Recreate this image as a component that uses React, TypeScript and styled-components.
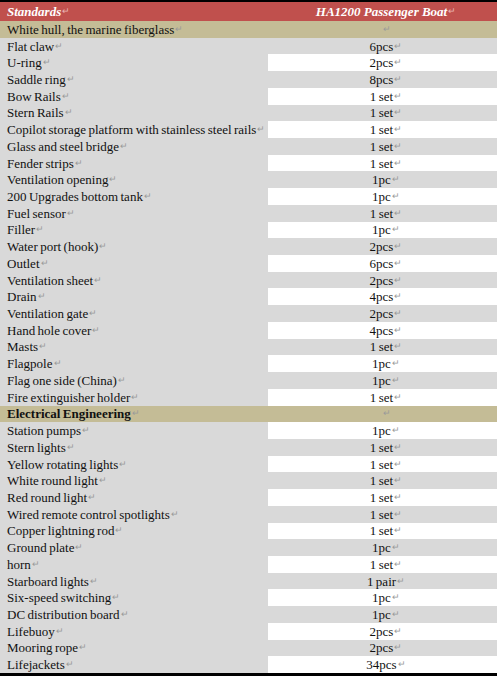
import styled, { createGlobalStyle } from 'styled-components';

const GlobalStyle = createGlobalStyle`
  html, body {
    margin: 0;
    padding: 0;
    background: #ffffff;
  }
  body {
    font-family: "Liberation Serif", "Times New Roman", serif;
    color: #111111;
  }
`;

const Table = styled.div`
  width: 497px;
  height: 676px;
  box-sizing: border-box;
  border-top: 2px solid #000;
  border-bottom: 3px solid #000;
  display: grid;
  grid-template-columns: 268px 1fr;
  grid-template-rows: 19px repeat(39, 1fr);
  background: #d9d9d9;
`;

const Cell = styled.div<{ $bg: string; $center?: boolean; $bold?: boolean }>`
  background: ${(p) => p.$bg};
  display: flex;
  align-items: center;
  justify-content: ${(p) => (p.$center ? 'center' : 'flex-start')};
  padding: 0 0 0 7px;
  font-size: 13px;
  line-height: 1;
  word-spacing: -0.8px;
  white-space: nowrap;
  overflow: hidden;
  font-weight: ${(p) => (p.$bold ? 'bold' : 'normal')};
`;

const HeadCell = styled(Cell)`
  color: #ffffff;
  font-style: italic;
  font-weight: bold;
  word-spacing: 0;
`;

const Mark = styled.span<{ $light?: boolean }>`
  color: ${(p) => (p.$light ? '#e8b4b3' : '#9a9a9a')};
  font-size: 9px;
  font-weight: normal;
  font-style: normal;
  margin-left: 1px;
`;

const RED = '#c0504d';
const TAN = '#c4bc96';
const GRAY = '#d9d9d9';
const WHITE = '#ffffff';

type Row = { name: string; qty: string } | { section: string };

const rows: Row[] = [
  { section: 'White hull, the marine fiberglass' },
  { name: 'Flat claw', qty: '6pcs' },
  { name: 'U-ring', qty: '2pcs' },
  { name: 'Saddle ring', qty: '8pcs' },
  { name: 'Bow Rails', qty: '1 set' },
  { name: 'Stern Rails', qty: '1 set' },
  { name: 'Copilot storage platform with stainless steel rails', qty: '1 set' },
  { name: 'Glass and steel bridge', qty: '1 set' },
  { name: 'Fender strips', qty: '1 set' },
  { name: 'Ventilation opening', qty: '1pc' },
  { name: '200 Upgrades bottom tank', qty: '1pc' },
  { name: 'Fuel sensor', qty: '1 set' },
  { name: 'Filler', qty: '1pc' },
  { name: 'Water port (hook)', qty: '2pcs' },
  { name: 'Outlet', qty: '6pcs' },
  { name: 'Ventilation sheet', qty: '2pcs' },
  { name: 'Drain', qty: '4pcs' },
  { name: 'Ventilation gate', qty: '2pcs' },
  { name: 'Hand hole cover', qty: '4pcs' },
  { name: 'Masts', qty: '1 set' },
  { name: 'Flagpole', qty: '1pc' },
  { name: 'Flag one side (China)', qty: '1pc' },
  { name: 'Fire extinguisher holder', qty: '1 set' },
  { section: 'Electrical Engineering' },
  { name: 'Station pumps', qty: '1pc' },
  { name: 'Stern lights', qty: '1 set' },
  { name: 'Yellow rotating lights', qty: '1 set' },
  { name: 'White round light', qty: '1 set' },
  { name: 'Red round light', qty: '1 set' },
  { name: 'Wired remote control spotlights', qty: '1 set' },
  { name: 'Copper lightning rod', qty: '1 set' },
  { name: 'Ground plate', qty: '1pc' },
  { name: 'horn', qty: '1 set' },
  { name: 'Starboard lights', qty: '1 pair' },
  { name: 'Six-speed switching', qty: '1pc' },
  { name: 'DC distribution board', qty: '1pc' },
  { name: 'Lifebuoy', qty: '2pcs' },
  { name: 'Mooring rope', qty: '2pcs' },
  { name: 'Lifejackets', qty: '34pcs' },
];

const M = '\u21B5';

export default function App() {
  return (
    <>
      <GlobalStyle />
      <Table>
        <HeadCell $bg={RED}>
          Standards<Mark $light>{M}</Mark>
        </HeadCell>
        <HeadCell $bg={RED} $center>
          HA1200 Passenger Boat<Mark $light>{M}</Mark>
        </HeadCell>
        {rows.map((row, i) =>
          'section' in row ? (
            [
              <Cell key={i + 'a'} $bg={TAN} $bold={row.section === 'Electrical Engineering'}>
                {row.section}
                <Mark>{M}</Mark>
              </Cell>,
              <Cell key={i + 'b'} $bg={TAN} $center>
                <Mark>{M}</Mark>
              </Cell>,
            ]
          ) : (
            [
              <Cell key={i + 'a'} $bg={GRAY}>
                {row.name}
                <Mark>{M}</Mark>
              </Cell>,
              <Cell key={i + 'b'} $bg={i % 2 === 0 ? WHITE : GRAY} $center>
                {row.qty}
                <Mark>{M}</Mark>
              </Cell>,
            ]
          )
        )}
      </Table>
    </>
  );
}
